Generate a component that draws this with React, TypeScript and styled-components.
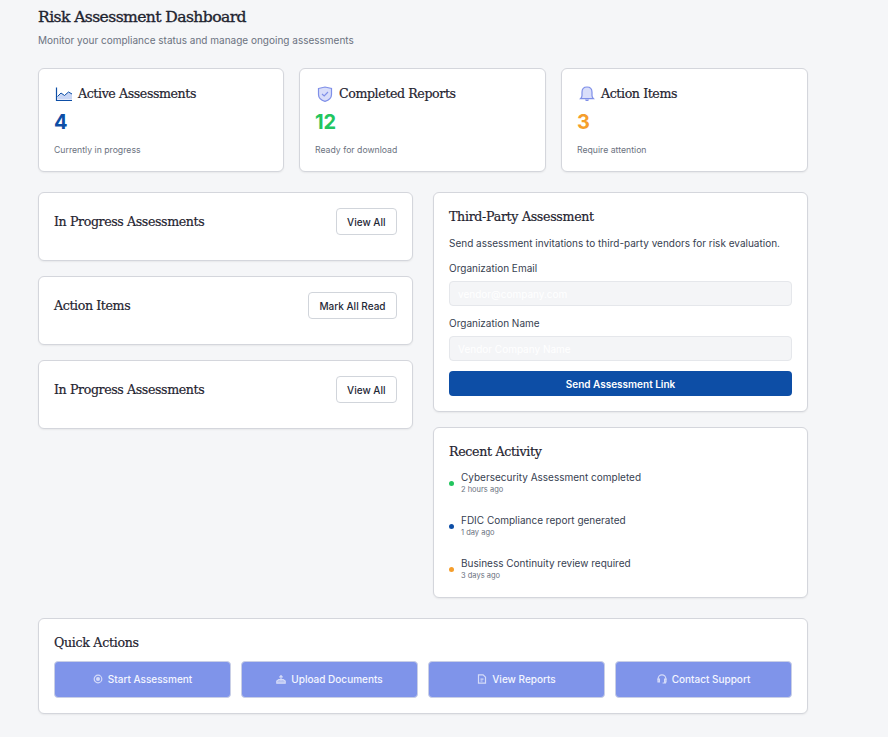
import styled, { createGlobalStyle } from 'styled-components'

const GlobalStyle = createGlobalStyle`
  html, body {
    margin: 0;
    padding: 0;
    background: #f5f6f8;
    font-family: Inter, "Liberation Sans", sans-serif;
  }
  * { box-sizing: border-box; }
`

const serif = `"DejaVu Serif", "Liberation Serif", serif`

const Page = styled.main`
  display: flex;
  flex-direction: column;
  width: 770px;
  margin-left: 38px;
  padding-top: 7px;
  padding-bottom: 23px;
`

const Title = styled.h1`
  margin: 0;
  font-family: ${serif};
  font-size: 15.6px;
  line-height: 20px;
  letter-spacing: -0.6px;
  font-weight: 400;
  -webkit-text-stroke: 0.35px #1f2430;
  color: #1f2430;
`

const Subtitle = styled.p`
  margin: 7px 0 0;
  font-size: 10px;
  line-height: 13px;
  color: #6b7280;
`

const StatGrid = styled.section`
  display: grid;
  grid-template-columns: 246px 247px 247px;
  gap: 15px;
  margin-top: 21px;
`

const Card = styled.div`
  background: #fff;
  border: 1px solid #d4d6dc;
  border-radius: 6px;
  box-shadow: 0 1px 2px rgba(0, 0, 0, 0.06);
`

const StatCard = styled(Card)`
  height: 104px;
  padding: 15px;
`

const StatHead = styled.div`
  display: flex;
  align-items: center;
  gap: 5px;
  height: 20px;
  padding-left: 1px;
`

const HeadIcon = styled.svg`
  width: 18px;
  height: 18px;
  flex: none;
`

const CardTitle = styled.h3`
  margin: 0;
  font-family: ${serif};
  font-size: 12.6px;
  line-height: 20px;
  letter-spacing: -0.4px;
  font-weight: 400;
  -webkit-text-stroke: 0.2px #1f2430;
  color: #1f2430;
`

const StatValue = styled.div<{ $color: string }>`
  margin-top: 6px;
  font-size: 20px;
  line-height: 24px;
  font-weight: 700;
  color: ${({ $color }) => $color};
`

const StatNote = styled.div`
  margin-top: 10px;
  font-size: 8.7px;
  line-height: 12px;
  color: #6b7280;
`

const Columns = styled.section`
  display: grid;
  grid-template-columns: 375px 375px;
  gap: 20px;
  margin-top: 20px;
  align-items: start;
`

const Stack = styled.div`
  display: flex;
  flex-direction: column;
  gap: 15px;
`

const HeaderPanel = styled(Card)`
  display: flex;
  align-items: flex-start;
  justify-content: space-between;
  height: 69px;
  padding: 15px;
`

const PanelTitle = styled.h2`
  margin: 0;
  font-family: ${serif};
  font-size: 12.6px;
  line-height: 27px;
  letter-spacing: -0.38px;
  font-weight: 400;
  -webkit-text-stroke: 0.2px #1f2430;
  color: #1f2430;
`

const OutlineButton = styled.button`
  height: 27px;
  padding: 0 10.5px;
  background: #fff;
  border: 1px solid #d1d5db;
  border-radius: 4px;
  font-family: inherit;
  font-size: 10px;
  font-weight: 500;
  color: #1f2937;
`

const FormPanel = styled(Card)`
  height: 220px;
  padding: 15px;
`

const SideTitle = styled.h3`
  margin: 0;
  font-family: ${serif};
  font-size: 12.6px;
  line-height: 18px;
  letter-spacing: -0.3px;
  font-weight: 400;
  -webkit-text-stroke: 0.2px #1f2430;
  color: #1f2430;
`

const Description = styled.p`
  margin: 11px 0 0;
  font-size: 10px;
  line-height: 13px;
  color: #374151;
`

const Fields = styled.div`
  padding-top: 1px;
`

const FieldLabel = styled.label`
  display: block;
  margin-top: 11px;
  font-size: 10px;
  line-height: 13px;
  color: #374151;
`

const FieldInput = styled.input`
  display: block;
  width: 100%;
  height: 25px;
  margin-top: 6px;
  padding: 0 8px;
  background: #f4f5f7;
  border: 1px solid #e5e7eb;
  border-radius: 4px;
  font-family: inherit;
  font-size: 10px;

  &::placeholder {
    color: #fff;
    opacity: 1;
  }
`

const SubmitButton = styled.button`
  display: block;
  width: 100%;
  height: 25px;
  margin-top: 10px;
  background: #0d4ea6;
  border: 0;
  border-radius: 4px;
  font-family: inherit;
  font-size: 10px;
  font-weight: 600;
  color: #fff;
`

const ActivityPanel = styled(Card)`
  height: 171px;
  padding: 15px;
`

const ActivityList = styled.ul`
  display: flex;
  flex-direction: column;
  gap: 19px;
  margin: 10px 0 0;
  padding: 0;
  list-style: none;
`

const ActivityRow = styled.li`
  display: flex;
  align-items: center;
  gap: 7px;
`

const Dot = styled.span<{ $color: string }>`
  width: 5px;
  height: 5px;
  flex: none;
  border-radius: 50%;
  background: ${({ $color }) => $color};
`

const ActivityText = styled.div`
  font-size: 10px;
  line-height: 13px;
  color: #374151;
`

const ActivityTime = styled.div`
  font-size: 7.5px;
  line-height: 11px;
  color: #6b7280;
`

const QuickPanel = styled(Card)`
  height: 96px;
  margin-top: 20px;
  padding: 15px;
`

const QuickGrid = styled.div`
  display: grid;
  grid-template-columns: repeat(4, 1fr);
  gap: 10px;
  margin-top: 9px;
`

const QuickButton = styled.button`
  display: flex;
  align-items: center;
  justify-content: center;
  gap: 5px;
  height: 37px;
  padding: 0 0 1px;
  background: #7f94ea;
  border: 1px solid #c9cfe6;
  border-radius: 4px;
  font-family: inherit;
  font-size: 10px;
  font-weight: 500;
  color: #f4f6ff;
`

const QuickIcon = styled.svg`
  width: 10px;
  height: 10px;
  flex: none;
  fill: none;
  stroke: #d5dbf8;
  stroke-width: 1.2;
`

const activity = [
  { text: 'Cybersecurity Assessment completed', time: '2 hours ago', color: '#22c55e' },
  { text: 'FDIC Compliance report generated', time: '1 day ago', color: '#0d4ea6' },
  { text: 'Business Continuity review required', time: '3 days ago', color: '#f59e2c' },
]

export default function App() {
  return (
    <>
      <GlobalStyle />
      <Page>
        <Title>Risk Assessment Dashboard</Title>
        <Subtitle>Monitor your compliance status and manage ongoing assessments</Subtitle>

        <StatGrid>
          <StatCard>
            <StatHead>
              <HeadIcon viewBox="0 0 18 18">
                <path d="M2.5 11.5 6 8l3.5 2.5L13.5 7l3.5 2v5.5H2.5z" fill="#c9d6f5" />
                <path d="M1.5 2.5V15.5H17" fill="none" stroke="#0d4ea6" strokeWidth="1.2" />
                <path d="M2.5 11.5 6 8l3.5 2.5L13.5 7l3.5 2" fill="none" stroke="#0d4ea6" strokeWidth="1" />
              </HeadIcon>
              <CardTitle>Active Assessments</CardTitle>
            </StatHead>
            <StatValue $color="#0d4ea6">4</StatValue>
            <StatNote>Currently in progress</StatNote>
          </StatCard>
          <StatCard>
            <StatHead>
              <HeadIcon viewBox="0 0 18 18">
                <path d="M2.5 3.5 9 2l6.5 1.5v6c0 3.5-3 5.8-6.5 6.8-3.5-1-6.5-3.3-6.5-6.8z" fill="#d9defa" stroke="#7f8fe8" strokeWidth="1.2" />
                <path d="m6 9 2.2 2L12 7" fill="none" stroke="#7f8fe8" strokeWidth="1.1" />
              </HeadIcon>
              <CardTitle>Completed Reports</CardTitle>
            </StatHead>
            <StatValue $color="#22c55e">12</StatValue>
            <StatNote>Ready for download</StatNote>
          </StatCard>
          <StatCard>
            <StatHead>
              <HeadIcon viewBox="0 0 18 18">
                <path d="M9 2c-3.2 0-5 2.3-5 5.2v3.3c0 1.5-.7 2.4-1.5 3.2h13c-.8-.8-1.5-1.7-1.5-3.2V7.2C14 4.3 12.2 2 9 2z" fill="#d9defa" stroke="#7f8fe8" strokeWidth="1.2" />
                <path d="M7 14.5c.2 1 1 1.6 2 1.6s1.8-.6 2-1.6z" fill="#7f8fe8" />
              </HeadIcon>
              <CardTitle>Action Items</CardTitle>
            </StatHead>
            <StatValue $color="#f59e2c">3</StatValue>
            <StatNote>Require attention</StatNote>
          </StatCard>
        </StatGrid>

        <Columns>
          <Stack>
            <HeaderPanel>
              <PanelTitle>In Progress Assessments</PanelTitle>
              <OutlineButton>View All</OutlineButton>
            </HeaderPanel>
            <HeaderPanel>
              <PanelTitle>Action Items</PanelTitle>
              <OutlineButton>Mark All Read</OutlineButton>
            </HeaderPanel>
            <HeaderPanel>
              <PanelTitle>In Progress Assessments</PanelTitle>
              <OutlineButton>View All</OutlineButton>
            </HeaderPanel>
          </Stack>

          <Stack>
            <FormPanel>
              <SideTitle>Third-Party Assessment</SideTitle>
              <Description>Send assessment invitations to third-party vendors for risk evaluation.</Description>
              <Fields>
                <FieldLabel>Organization Email</FieldLabel>
                <FieldInput placeholder="vendor@company.com" />
                <FieldLabel>Organization Name</FieldLabel>
                <FieldInput placeholder="Vendor Company Name" />
                <SubmitButton>Send Assessment Link</SubmitButton>
              </Fields>
            </FormPanel>
            <ActivityPanel>
              <SideTitle>Recent Activity</SideTitle>
              <ActivityList>
                {activity.map((item) => (
                  <ActivityRow key={item.text}>
                    <Dot $color={item.color} />
                    <div>
                      <ActivityText>{item.text}</ActivityText>
                      <ActivityTime>{item.time}</ActivityTime>
                    </div>
                  </ActivityRow>
                ))}
              </ActivityList>
            </ActivityPanel>
          </Stack>
        </Columns>

        <QuickPanel>
          <SideTitle>Quick Actions</SideTitle>
          <QuickGrid>
            <QuickButton>
              <QuickIcon viewBox="0 0 10 10">
                <circle cx="5" cy="5" r="3.8" />
                <circle cx="5" cy="5" r="2" fill="#d5dbf8" stroke="none" />
              </QuickIcon>
              Start Assessment
            </QuickButton>
            <QuickButton>
              <QuickIcon viewBox="0 0 10 10">
                <path d="M.8 9.2V7l2-1.5h4.4L9.2 7v2.2z" fill="#b9c4f2" />
                <path d="M5 6.5V2M3.4 3.4 5 1.6l1.6 1.8" />
              </QuickIcon>
              Upload Documents
            </QuickButton>
            <QuickButton>
              <QuickIcon viewBox="0 0 10 10">
                <path d="M1.5.8h4.6l2.4 2.4v6h-7z" />
                <path d="M3.5 5.2h3M3.5 7h2" />
              </QuickIcon>
              View Reports
            </QuickButton>
            <QuickButton>
              <QuickIcon viewBox="0 0 10 10">
                <path d="M1.2 6V4.6a3.8 3.8 0 0 1 7.6 0V6" />
                <path d="M1 5h1.4v2.8H1zM7.6 5H9v2.8H7.6zM8.4 8v1H5.6" />
              </QuickIcon>
              Contact Support
            </QuickButton>
          </QuickGrid>
        </QuickPanel>
      </Page>
    </>
  )
}
